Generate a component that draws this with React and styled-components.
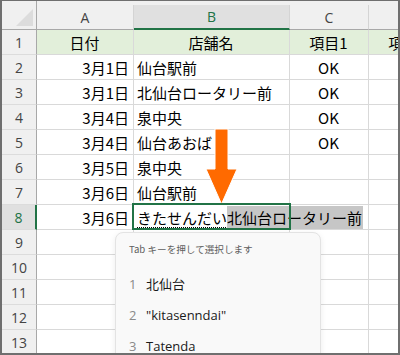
import React from "react";
import styled, { createGlobalStyle, css } from "styled-components";

const GREEN = "#217346";
const GRID = "#d9d9d9";

const GlobalStyle = createGlobalStyle`
  html, body { margin: 0; padding: 0; background: #ffffff; }
  * { box-sizing: border-box; }
`;

const Frame = styled.div`
  position: relative;
  width: 400px;
  height: 355px;
  overflow: hidden;
  background: #f0f0f0;
  border: 2px solid #6f6f6f;
  border-top-width: 1px;
  font-family: "Noto Sans CJK JP", "Noto Sans", sans-serif;
`;

const Sheet = styled.div`
  display: grid;
  width: 446px;
  grid-template-columns: 35px 97px 156px 79px 79px;
  grid-template-rows: 29px repeat(13, 25px);
`;

const Corner = styled.div`
  border-right: 1px solid #a8a8a8;
  border-bottom: 1px solid #a8a8a8;
  display: flex;
  align-items: flex-end;
  justify-content: flex-end;
  padding: 0 3px 3px 0;
`;

const ColHead = styled.div`
  align-self: end;
  height: 25px;
  display: flex;
  align-items: center;
  justify-content: center;
  font-family: "Open Sans", "Noto Sans", sans-serif;
  font-size: 14px;
  color: #444;
  border-right: 1px solid #d4d4d4;
  border-bottom: 1px solid #a8a8a8;
  ${(p) =>
    p.$selected &&
    css`
      background: #e0e0e0;
      color: ${GREEN};
      border-bottom: 2px solid ${GREEN};
    `}
`;

const RowHead = styled.div`
  display: flex;
  align-items: center;
  justify-content: center;
  font-family: "Open Sans", "Noto Sans", sans-serif;
  font-size: 14px;
  color: #444;
  border-right: 1px solid #a8a8a8;
  border-bottom: 1px solid #dcdcdc;
  ${(p) =>
    p.$selected &&
    css`
      background: #e0e0e0;
      color: ${GREEN};
      border-right: 2px solid ${GREEN};
    `}
`;

const Cell = styled.div`
  display: flex;
  align-items: center;
  justify-content: ${(p) =>
    p.$align === "right" ? "flex-end" : p.$align === "center" ? "center" : "flex-start"};
  padding: 0 4px 0 3px;
  background: ${(p) => (p.$header ? "#e2efda" : "#ffffff")};
  border-right: 1px solid ${GRID};
  border-bottom: 1px solid ${GRID};
  font-size: 15px;
  color: #000;
  white-space: nowrap;
  overflow: hidden;
`;

const EditCell = styled(Cell)`
  position: relative;
  overflow: visible;
  z-index: 2;
  padding-left: 3px;
`;

const SelectBox = styled.div`
  position: absolute;
  left: -2px;
  top: -2px;
  right: -2px;
  bottom: -1px;
  border: 2px solid ${GREEN};
  pointer-events: none;
`;

const Composing = styled.span`
  text-decoration: underline dotted #000;
  text-decoration-thickness: 1px;
  text-underline-offset: 3px;
`;

const Caret = styled.span`
  display: inline-block;
  width: 1px;
  height: 23px;
  background: #000;
`;

const Suggest = styled.span`
  background: #c6c6c6;
  line-height: 23px;
  padding-right: 1px;
`;

const Dot = styled.span`
  display: inline-block;
  width: 20px;
  height: 20px;
  border-radius: 50%;
  border: 2px solid #f4a11e;
  align-self: flex-start;
  margin-top: 1px;
`;

const Arrow = styled.svg`
  position: absolute;
  left: 203px;
  top: 127px;
`;

const Popup = styled.div`
  position: absolute;
  left: 113px;
  top: 231px;
  width: 206px;
  height: 140px;
  background: #f9f9f9;
  border: 1px solid #e3e3e3;
  border-radius: 8px;
  box-shadow: 0 2px 6px rgba(0, 0, 0, 0.08);
  padding: 8px 0 0 13px;
  display: flex;
  flex-direction: column;
  font-family: "Noto Sans CJK JP", "Noto Sans", sans-serif;
`;

const Hint = styled.div`
  font-size: 9.6px;
  color: #5f5f5f;
  height: 27px;
  line-height: 16px;
`;

const Item = styled.div`
  display: flex;
  align-items: center;
  gap: 9px;
  height: 31px;
  font-size: 13px;
  color: #1a1a1a;
`;

const ItemNo = styled.span`
  width: 8px;
  color: #8a8a8a;
  font-family: "Open Sans", "Noto Sans", sans-serif;
  font-size: 13px;
`;

const ItemText = styled.span`
  font-family: "Open Sans", "Noto Sans CJK JP", sans-serif;
`;

const rows = [
  ["3月1日", "仙台駅前", "OK", true],
  ["3月1日", "北仙台ロータリー前", "OK", true],
  ["3月4日", "泉中央", "OK", true],
  ["3月4日", "仙台あおば", "OK", true],
  ["3月5日", "泉中央", "", false],
  ["3月6日", "仙台駅前", "", false],
];

export default function App() {
  return (
    <>
      <GlobalStyle />
      <Frame>
        <Sheet>
          <Corner>
            <svg width="17" height="17" viewBox="0 0 17 17">
              <polygon points="17,0 17,17 0,17" fill="#dcdcdc" />
            </svg>
          </Corner>
          <ColHead>A</ColHead>
          <ColHead $selected>B</ColHead>
          <ColHead>C</ColHead>
          <ColHead />

          <RowHead>1</RowHead>
          <Cell $header $align="center">日付</Cell>
          <Cell $header $align="center">店舗名</Cell>
          <Cell $header $align="center">項目1</Cell>
          <Cell $header $align="center">項目2</Cell>

          {rows.map(([a, b, c, dot], i) => (
            <React.Fragment key={i}>
              <RowHead>{i + 2}</RowHead>
              <Cell $align="right">{a}</Cell>
              <Cell>{b}</Cell>
              <Cell $align="center">{c}</Cell>
              <Cell $align="center">{dot && <Dot />}</Cell>
            </React.Fragment>
          ))}

          <RowHead $selected>8</RowHead>
          <Cell $align="right">3月6日</Cell>
          <EditCell>
            <SelectBox />
            <Composing>きたせんだい</Composing>
            <Caret />
            <Suggest>北仙台ロータリー前</Suggest>
          </EditCell>
          <Cell />
          <Cell />

          {[9, 10, 11, 12, 13].map((n) => (
            <React.Fragment key={n}>
              <RowHead>{n}</RowHead>
              <Cell />
              <Cell />
              <Cell />
              <Cell />
            </React.Fragment>
          ))}
        </Sheet>

        <Arrow width="34" height="78" viewBox="0 0 34 78">
          <path
            d="M10 1 H23 V41 H32 L16.5 76 L1 41 H10 Z"
            fill="#ff6a00"
            stroke="#ffffff"
            strokeWidth="1"
          />
        </Arrow>

        <Popup>
          <Hint>Tab キーを押して選択します</Hint>
          <Item>
            <ItemNo>1</ItemNo>
            <ItemText>北仙台</ItemText>
          </Item>
          <Item>
            <ItemNo>2</ItemNo>
            <ItemText>"kitasenndai"</ItemText>
          </Item>
          <Item>
            <ItemNo>3</ItemNo>
            <ItemText>Tatenda</ItemText>
          </Item>
        </Popup>
      </Frame>
    </>
  );
}
